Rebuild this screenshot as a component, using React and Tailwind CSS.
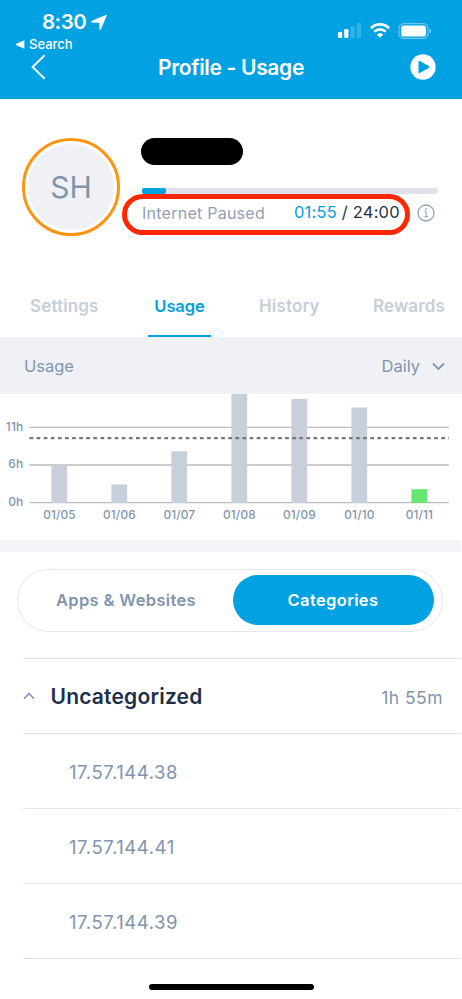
import React from "react";

const bars = [
  { label: "01/05", top: 72 },
  { label: "01/06", top: 90.5 },
  { label: "01/07", top: 57.3 },
  { label: "01/08", top: 0 },
  { label: "01/09", top: 5 },
  { label: "01/10", top: 13.5 },
  { label: "01/11", top: 95.2, today: true },
];

const gridLines = [
  { label: "11h", y: 33.3 },
  { label: "6h", y: 71 },
  { label: "0h", y: 108.7 },
];

const addresses = ["17.57.144.38", "17.57.144.41", "17.57.144.39"];

const StatusIcons = () => {
  return (
    <div className="flex items-center">
      {/* Signal */}
      <svg width="24" height="16" viewBox="0 0 24 16" fill="#fff">
        <rect x="0" y="9" width="4.2" height="6" rx="1.2" />
        <rect x="6.2" y="6" width="4.2" height="9" rx="1.2" />
        <rect x="12.5" y="3" width="4.2" height="12" rx="1.2" opacity="0.2" />
        <rect x="18.8" y="0" width="4.2" height="15" rx="1.2" opacity="0.2" />
      </svg>
      {/* Wifi */}
      <svg className="ml-2" width="20" height="16" viewBox="0 0 20 16" fill="none" stroke="#fff">
        <path d="M1 5.2C6 .2 14 .2 19 5.2" strokeWidth="2.7" />
        <path d="M4.3 8.6C7.5 5.6 12.5 5.6 15.7 8.6" strokeWidth="2.6" />
        <path d="M10 14.8L6.7 11.6C8.6 9.9 11.4 9.9 13.3 11.6Z" fill="#fff" stroke="none" />
      </svg>
      {/* Battery */}
      <svg className="ml-2" width="34" height="16" viewBox="0 0 34 16">
        <rect x="1" y="0.6" width="29" height="14.8" rx="4.6" fill="none" stroke="#fff" strokeOpacity="0.42" strokeWidth="1.2" />
        <rect x="3" y="2.4" width="25" height="11.2" rx="2.8" fill="#fff" />
        <path d="M31.5 5.4C33.7 6.2 33.7 9.8 31.5 10.6Z" fill="#fff" fillOpacity="0.5" />
      </svg>
    </div>
  );
};

const Header = () => {
  return (
    <header className="h-[99px] bg-[#02a1e2] border-b border-[#0296d4] text-white">
      <div className="flex justify-between h-[52px] pt-[10px] pl-4 pr-[30px]">
        <div>
          <div className="flex items-center h-6 pl-[26px]">
            <span className="text-[20.5px] font-semibold tracking-[-0.5px]">8:30</span>
            <svg className="ml-[5px]" width="16" height="17" viewBox="0 0 16 17" fill="#fff">
              <path d="M14.7 .9C15.5 .5 16 1 15.7 1.8L10 15.1C9.6 16.1 8.3 15.9 8.3 14.8V9.3C8.3 8.9 8.1 8.7 7.7 8.7H1.5C.1 8.7 -.1 7.3 1 6.8Z" />
            </svg>
          </div>
          <div className="flex items-center h-[21px]">
            <svg width="9" height="9" viewBox="0 0 9 9" fill="#fff">
              <path d="M8.4 .2V8.8L0 5.1C-.4 4.8 -.4 4.2 0 3.9Z" />
            </svg>
            <span className="ml-[4px] text-[13px] font-medium">Search</span>
          </div>
        </div>
        <div className="pt-[13px]">
          <StatusIcons />
        </div>
      </div>
      <div className="flex items-center justify-between h-[30px] pl-[31px] pr-[26px]">
        <svg width="15" height="26" viewBox="0 0 15 26" fill="none" stroke="#fff" strokeWidth="1.9">
          <path d="M13.6 1.2L1.6 13L13.6 24.8" />
        </svg>
        <h1 className="ml-[6px] pt-[2px] text-[21px] font-semibold tracking-[-0.32px]">Profile - Usage</h1>
        <svg width="26" height="26" viewBox="0 0 26 26">
          <circle cx="13" cy="13" r="12.7" fill="#fff" />
          <path d="M8.5 7.6V18.4Q8.6 19.5 9.7 19L18.9 13.9Q20 13 18.9 12.1L9.7 7Q8.6 6.5 8.5 7.6Z" fill="#02a1e2" />
        </svg>
      </div>
    </header>
  );
};

const ProfileSummary = () => {
  return (
    <section className="flex h-[181px] pt-[39px] pl-[22px] pr-6">
      <div className="flex w-[98px] h-[98px] shrink-0 rounded-full border-[3.5px] border-[#ff9410] p-[3px]">
        <div className="flex flex-1 items-center justify-center rounded-full bg-[#eff1f5] text-[30px] text-[#8195ae]">
          SH
        </div>
      </div>
      <div className="relative ml-[21px] flex-1">
        <div className="w-[102px] h-[27px] rounded-full bg-black" />
        <div className="mt-[23px] ml-px h-[6px] rounded-full bg-[#dee2e8]">
          <div className="w-[24px] h-full rounded-[2px] bg-[#02a1e2]" />
        </div>
        <div className="flex items-center h-[37px] pl-px">
          <span className="w-[152px] text-[16px] tracking-[0.25px] text-[#8f9fb7]">Internet Paused</span>
          <span className="w-[122.5px] text-[16.5px] tracking-[0.2px] whitespace-nowrap text-[#24344d]">
            <span className="text-[#02a1e2]">01:55</span> / 24:00
          </span>
          <svg className="shrink-0" width="18" height="18" viewBox="0 0 18 18" fill="none" stroke="#8f9fb7">
            <circle cx="9" cy="9" r="8" strokeWidth="1.3" />
            <path d="M7.6 7.7H9.2V12.8M7.4 12.7H11" strokeWidth="1" />
            <circle cx="9" cy="5" r="0.9" fill="#8f9fb7" stroke="none" />
          </svg>
        </div>
        {/* Highlight over the paused time */}
        <div className="absolute left-[-19px] top-[56px] w-[288px] h-[41px] rounded-full border-[5.5px] border-[#ff2600]" />
      </div>
    </section>
  );
};

const Tabs = () => {
  return (
    <nav className="flex h-[57px] text-[17px] font-semibold tracking-[0.15px] text-[#c5ceda]">
      <span className="w-[118px] h-full pt-[14px] pl-[30px]">Settings</span>
      <span className="w-[63px] h-full pt-[14px] ml-[30px] text-center text-[16.5px] leading-6 tracking-[-0.1px] text-[#02a1e2] border-b-2 border-[#02a1e2]">
        Usage
      </span>
      <span className="w-[114px] h-full pt-[14px] pl-[48px]">History</span>
      <span className="h-full pt-[14px] pl-[48px]">Rewards</span>
    </nav>
  );
};

const UsageChart = () => {
  return (
    <svg className="block" width="462" height="146" viewBox="0 0 462 146" fontFamily="Inter, sans-serif" fill="#8195ae">
      {gridLines.map((line) => (
        <g key={line.label}>
          <path d={`M29.5 ${line.y}H449`} stroke="#bdbdbd" strokeWidth="1.3" />
          <text x="23.5" y={line.y + 3.2} textAnchor="end" fontSize="12" fontWeight="500" letterSpacing="0.2">
            {line.label}
          </text>
        </g>
      ))}
      {bars.map((bar, i) => (
        <g key={bar.label}>
          <rect x={51.4 + i * 60} y={bar.top} width="15.8" height={109 - bar.top} fill={bar.today ? "#67e671" : "#c6cfda"} />
          <text x={59.4 + i * 60} y="125.2" textAnchor="middle" fontSize="11.8" fontWeight="450" letterSpacing="0.15">
            {bar.label}
          </text>
        </g>
      ))}
      <path d="M29.5 44.2H449" stroke="#777" strokeWidth="2.2" strokeDasharray="3.7 3.4" />
    </svg>
  );
};

const App = () => {
  return (
    <div className="relative w-[462px] h-[999px] overflow-hidden bg-white font-['Inter',sans-serif]">
      <Header />
      <ProfileSummary />
      <Tabs />
      <div className="flex items-center justify-between h-[57px] pt-px pl-6 pr-[17.5px] bg-[#eff1f5] text-[16.5px] text-[#8195ae]">
        <span>Usage</span>
        <span className="flex items-center">
          Daily
          <svg className="ml-[11.5px]" width="13" height="9" viewBox="0 0 13 9" fill="none" stroke="#8195ae" strokeWidth="1.8">
            <path d="M1 1.5L6.5 7L12 1.5" />
          </svg>
        </span>
      </div>
      <UsageChart />
      <div className="h-3 mr-[1px] bg-[#f3f4f7]" />

      <div className="flex h-[63px] mt-[17px] ml-[16.5px] w-[426px] rounded-full border border-[#e4e7ed] p-[5px] pr-[8px] text-[16.5px] font-semibold tracking-[0.35px]">
        <span className="flex flex-1 items-center justify-center pr-[3px] text-[#8195ae]">Apps &amp; Websites</span>
        <span className="flex w-[201px] h-[50px] items-center justify-center rounded-full bg-[#02a1e2] text-white">Categories</span>
      </div>

      <div className="mt-[26px] ml-[22.5px] mr-px">
        <div className="flex items-center h-[75px] border-t border-[#dfe3ea] pr-[18px]">
          <svg width="13" height="8" viewBox="0 0 13 8" fill="none" stroke="#8195ae" strokeWidth="1.5">
            <path d="M1 6.6L6 1.6L11 6.6" />
          </svg>
          <h2 className="flex-1 ml-[15px] pt-[2px] text-[21px] font-semibold tracking-[0.2px] text-[#1d2f49]">Uncategorized</h2>
          <span className="pt-[4px] text-[17.5px] tracking-[0.45px] text-[#8195ae]">1h 55m</span>
        </div>
        {addresses.map((address) => (
          <div key={address} className="flex items-center h-[75px] border-t border-[#dfe3ea] pt-[3px] pl-[46.5px] text-[18.5px] tracking-[0.55px] text-[#8195ae]">
            {address}
          </div>
        ))}
        <div className="border-t border-[#dfe3ea]" />
      </div>

      {/* Home indicator */}
      <div className="w-[165px] h-[6px] mt-[25px] ml-[149px] rounded-full bg-black" />
    </div>
  );
};

export default App;
